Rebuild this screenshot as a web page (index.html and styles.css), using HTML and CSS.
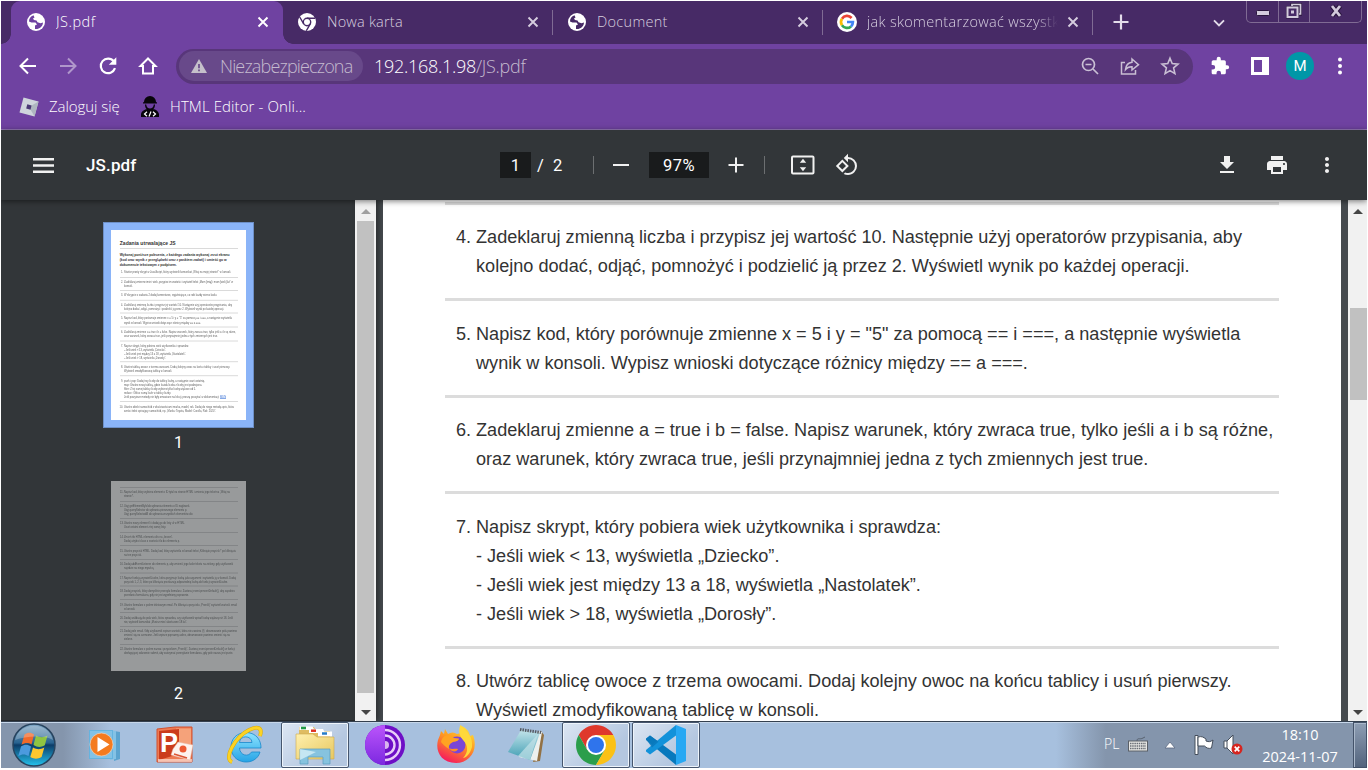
FILE: index.html
```html
<!DOCTYPE html>
<html lang="pl">
<head>
<meta charset="utf-8">
<title>JS.pdf</title>
<link rel="stylesheet" href="styles.css">
</head>
<body>
<svg class="defs" width="0" height="0">
  <defs>
    <symbol id="globe" viewBox="0 0 18 18"><circle cx="9" cy="9" r="9" fill="#fff"/><path d="M6.500 2.200C3.500 3.200 1.900 5.800 2 8.500L4.500 9.500H8.500L10 11.500 8 12.500V16c4 .6 7.800-2.200 8-6.500l-2.500.7-3-1L9.500 7.500 7 7 6 5.500 7.500 4.500z" fill="currentColor"/><path d="M10 2v2L8.500 5.500l2.500.8 1.500 1.500h3.400C15.500 5 13.300 2.500 10 2z" fill="#fff"/></symbol>
    <symbol id="x" viewBox="0 0 12 12"><path d="M1.500 1.500l9 9M10.500 1.500l-9 9" stroke="currentColor" stroke-width="1.900"/></symbol>
    <linearGradient id="orb" x1="0" y1="0" x2="0" y2="1"><stop offset="0" stop-color="#7fa6c4"/><stop offset=".45" stop-color="#28628f"/><stop offset=".5" stop-color="#0c3c68"/><stop offset="1" stop-color="#25c3ee"/></linearGradient>
    <linearGradient id="ie" x1="0" y1="0" x2="0" y2="1"><stop offset="0" stop-color="#8ee4ff"/><stop offset="1" stop-color="#26a4e6"/></linearGradient>
    <linearGradient id="fold" x1="0" y1="0" x2="1" y2="1"><stop offset="0" stop-color="#fff0ae"/><stop offset="1" stop-color="#e7c75f"/></linearGradient>
    <linearGradient id="tor" x1="0" y1="0" x2="0" y2="1"><stop offset="0" stop-color="#bb55fb"/><stop offset="1" stop-color="#7c28e0"/></linearGradient>
    <linearGradient id="fox" x1=".8" y1="0" x2=".3" y2="1"><stop offset="0" stop-color="#ffe73c"/><stop offset=".45" stop-color="#ff9a20"/><stop offset="1" stop-color="#f5175f"/></linearGradient>
    <linearGradient id="note" x1="0" y1="0" x2="0" y2="1"><stop offset="0" stop-color="#c3e4ea"/><stop offset="1" stop-color="#3d9cb2"/></linearGradient>
  </defs>
</svg>

<div class="screen">
  <header class="tabstrip">
    <div class="tab tab-active"><svg class="fav" color="#6f42a1"><use href="#globe"/></svg><span class="tab-title">JS.pdf</span><svg class="close"><use href="#x"/></svg></div>
    <div class="tab"><svg class="fav" viewBox="0 0 18 18"><circle cx="9" cy="9" r="9" fill="#fff"/><circle cx="9" cy="9" r="3.700" fill="#fff" stroke="#472a66" stroke-width="1.400"/><path d="M9 5.200h8M5.700 10.900 1.700 4M12.300 10.900 8.300 17.800" stroke="#472a66" stroke-width="1.400"/></svg><span class="tab-title t-nowa">Nowa karta</span><svg class="close"><use href="#x"/></svg></div>
    <div class="tab"><svg class="fav" color="#472a66"><use href="#globe"/></svg><span class="tab-title t-doc">Document</span><svg class="close"><use href="#x"/></svg></div>
    <div class="tab"><svg class="fav fav-g" viewBox="0 0 20 20"><circle cx="10" cy="10" r="10" fill="#fff"/><g fill="none" stroke-width="2.700"><path d="M14.600 6A6 6 0 0 0 5 6.700" stroke="#ea4335"/><path d="M5 6.700a6 6 0 0 0 0 6.600" stroke="#fbbc05"/><path d="M5 13.300a6 6 0 0 0 9 1.100" stroke="#34a853"/><path d="M14 14.400A6 6 0 0 0 15.900 10H10" stroke="#4285f4"/></g></svg><span class="tab-title t-jak">jak skomentarzować wszystko</span><svg class="close"><use href="#x"/></svg></div>
    <svg class="newtab" viewBox="0 0 16 16"><path d="M8 .5v15M.5 8h15" stroke="#e3dcea" stroke-width="2.200"/></svg>
    <svg class="chev" viewBox="0 0 12 8"><path d="M1 1.300l5 5 5-5" fill="none" stroke="#e3dcea" stroke-width="1.900"/></svg>
    <div class="wincontrols">
      <span><svg width="14" height="6" viewBox="0 0 14 6"><rect x=".5" y=".5" width="13" height="5" rx="1" fill="#d3cbdc" stroke="#2b173f"/></svg></span>
      <span><svg width="16" height="16" viewBox="0 0 16 16"><path d="M6 4V1.500h8.500V11H12" fill="none" stroke="#2b173f" stroke-width="3.400"/><path d="M6 4V1.500h8.500V11H12" fill="none" stroke="#d3cbdc" stroke-width="1.700"/><rect x="1.500" y="4.500" width="10" height="9.500" fill="#472a66" stroke="#2b173f" stroke-width="3"/><rect x="1.500" y="4.500" width="10" height="9.500" fill="#472a66" stroke="#d3cbdc" stroke-width="2"/><rect x="5" y="7.500" width="3" height="3" fill="#d3cbdc"/></svg></span>
      <span><svg width="14" height="14" viewBox="0 0 14 14"><path d="M3 2l8 10M11 2L3 12" stroke="#2b173f" stroke-width="5"/><path d="M3 2l8 10M11 2L3 12" stroke="#d3cbdc" stroke-width="2.800"/></svg></span>
    </div>
  </header>

  <nav class="toolbar">
    <svg class="tool" viewBox="0 0 20 20"><path d="M18 10H3M10 2.500 2.500 10l7.500 7.500" fill="none" stroke="#fff" stroke-width="2"/></svg>
    <svg class="tool dim" viewBox="0 0 20 20"><path d="M2 10h15M10 2.500l7.500 7.500-7.500 7.500" fill="none" stroke="#fff" stroke-width="2"/></svg>
    <svg class="tool" viewBox="0 0 20 20"><path d="M15.800 5.300A7.300 7.300 0 1 0 17 12.200" fill="none" stroke="#fff" stroke-width="2.200"/><path d="M18.300 1.200v7.500h-7.500z" fill="#fff"/></svg>
    <svg class="tool" viewBox="0 0 20 20"><path d="M10 2.500 2.500 10H5v7.500h10V10h2.500z" fill="none" stroke="#fff" stroke-width="2"/></svg>
    <div class="omnibox">
      <div class="chip"><svg width="16" height="14" viewBox="0 0 16 14"><path d="M8 0l8 14H0z" fill="#c5c0ca"/><path d="M8 5v4.300M8 10.500v1.700" stroke="#68498a" stroke-width="1.700"/></svg><span class="chip-text">Niezabezpieczona</span></div>
      <span class="url">192.168.1.98<i>/JS.pdf</i></span>
      <svg class="om" viewBox="0 0 20 20"><g fill="none" stroke="#c9bfd4" stroke-width="1.700"><circle cx="8.500" cy="8.500" r="6"/><path d="M13 13l5 5M5.500 8.500h6"/></g></svg>
      <svg class="om" viewBox="0 0 20 20"><g fill="none" stroke="#c9bfd4" stroke-width="1.500"><path d="M5 6.500H1.500v11.500h14v-4"/><path d="M12 3l6.500 5.700L12 14v-3.300c-3-.2-5 .8-6.500 2.800.4-4 2.500-6.700 6.500-7.200z"/></g></svg>
      <svg class="om" viewBox="0 0 20 20"><path d="M10 2.200l2.200 5.400 5.800.5-4.400 3.800 1.300 5.700-4.900-3-4.900 3 1.300-5.700L2 8.100l5.800-.5z" fill="none" stroke="#c9bfd4" stroke-width="1.600"/></svg>
    </div>
    <svg class="tool ext" viewBox="0 0 24 24"><path fill="#fff" d="M20.500 11H19V7a2 2 0 0 0-2-2h-4V3.500a2.500 2.500 0 0 0-5 0V5H4a2 2 0 0 0-2 2v3.800h1.500a2.700 2.700 0 0 1 0 5.400H2V20c0 1.100.9 2 2 2h3.800v-1.500a2.700 2.700 0 0 1 5.400 0V22H17a2 2 0 0 0 2-2v-4h1.500a2.500 2.500 0 0 0 0-5z"/></svg>
    <svg class="tool" viewBox="0 0 20 20"><path fill="#fff" fill-rule="evenodd" d="M1 1h18v18H1zM4 4v12h8V4z"/></svg>
    <span class="avatar">M</span>
    <svg class="tool" viewBox="0 0 20 20"><g fill="#fff"><circle cx="10" cy="3.500" r="2"/><circle cx="10" cy="10" r="2"/><circle cx="10" cy="16.500" r="2"/></g></svg>
  </nav>

  <nav class="bookmarks">
    <svg width="20" height="20" viewBox="0 0 20 20"><path d="M4.500.5 19.500 4.500 15.500 19.500.5 15.500z" fill="#cfd5dc"/><path d="M10 10l9.500-5.500-4 15z" fill="#aeb6c0"/><path d="M8.300 7.300l4.300 1.100-1.100 4.300-4.300-1.100z" fill="#4b3a75"/></svg>
    <span class="bm-a">Zaloguj się</span>
    <svg width="20" height="22" viewBox="0 0 20 22"><path d="M4 6a6 6 0 0 1 12 0l1 .5v1H3v-1zM5 8.500h10c0 8-10 8-10 0zM1 21v-3c1-3.500 4-4.500 6-5l3 1.500 3-1.500c3 .5 5 2 6 5v3z" fill="#08050b"/><path d="M6.200 8h7.600c0 6-7.600 6-7.600 0z" fill="#6f42a1"/><path d="M7 15.800 4.500 18 7 20.200M13 15.800l2.500 2.200-2.500 2.200M11 15.500l-2 5" fill="none" stroke="#fff" stroke-width="1.200"/></svg>
    <span class="bm-b">HTML Editor - Onli...</span>
  </nav>

  <div class="pdfbar">
    <svg class="burger" viewBox="0 0 21 15"><path d="M0 1.300h21M0 7.500h21M0 13.700h21" stroke="#f1f1f1" stroke-width="2.400"/></svg>
    <strong class="pdf-title">JS.pdf</strong>
    <span class="pagebox">1</span><span class="pagecount">/ &nbsp;2</span>
    <i class="sep"></i>
    <svg class="minus" viewBox="0 0 16 16"><path d="M0 8h16" stroke="#f1f1f1" stroke-width="2"/></svg>
    <span class="zoombox">97%</span>
    <svg class="plus" viewBox="0 0 16 16"><path d="M.5 8h15M8 .5v15" stroke="#f1f1f1" stroke-width="2"/></svg>
    <i class="sep sep2"></i>
    <svg class="fit" viewBox="0 0 24 20"><rect x="1" y="1.500" width="21.500" height="17" rx="1" fill="none" stroke="#f1f1f1" stroke-width="2"/><path d="M12 3.800l3.200 4H8.800zM12 16.200l3.200-4H8.800z" fill="#f1f1f1"/></svg>
    <svg class="rot" viewBox="0 0 24 24"><path fill="#f1f1f1" d="M7.340 6.410L.86 12.900l6.490 6.480 6.490-6.480-6.500-6.490zM3.690 12.900l3.660-3.660L11 12.900l-3.660 3.660-3.650-3.660zm15.670-6.260A8.950 8.950 0 0 0 13 4V.76L8.760 5 13 9.240V6c1.790 0 3.580.68 4.950 2.050a7.007 7.007 0 0 1 0 9.900 6.973 6.973 0 0 1-7.790 1.440l-1.490 1.490C10.020 21.620 11.510 22 13 22c2.300 0 4.610-.88 6.360-2.640a8.980 8.980 0 0 0 0-12.720z"/></svg>
    <div class="pdf-actions">
      <svg viewBox="0 0 24 24"><path fill="#f1f1f1" d="M19 9h-4V3H9v6H5l7 7 7-7zM5 18v2h14v-2H5z"/></svg>
      <svg viewBox="0 0 24 24"><path fill="#f1f1f1" d="M19 8H5c-1.660 0-3 1.340-3 3v6h4v4h12v-4h4v-6c0-1.660-1.340-3-3-3zm-3 11H8v-5h8v5zm3-7c-.55 0-1-.45-1-1s.45-1 1-1 1 .45 1 1-.45 1-1 1zm-1-9H6v4h12V3z"/></svg>
      <svg viewBox="0 0 24 24"><path fill="#f1f1f1" d="M12 8c1.100 0 2-.9 2-2s-.9-2-2-2-2 .9-2 2 .9 2 2 2zm0 2c-1.100 0-2 .9-2 2s.9 2 2 2 2-.9 2-2-.9-2-2-2zm0 6c-1.100 0-2 .9-2 2s.9 2 2 2 2-.9 2-2-.9-2-2-2z"/></svg>
    </div>
  </div>

  <main class="viewer">
    <aside class="thumbs">
      <div class="thumb selected">
        <svg width="135" height="190" viewBox="0 0 135 190">
          <rect width="135" height="190" fill="#fff"/>
          <g stroke="#d6d6d6" stroke-width=".9"><path d="M9 18.500h118M9 47.500h118M9 60.500h118M9 70.300h118M9 83h118M9 97h118M9 111h118M9 131.700h118M9 145.700h118M9 171.500h118"/></g>
          <g font-weight="bold" fill="#333"><text x="8.700" y="15" font-size="5" textLength="56">Zadania utrwalające JS</text>
          <g font-size="3.400"><text x="8.700" y="26" textLength="110">Wykonaj poniższe polecenia, z każdego zadania wykonaj zrzut ekranu</text><text x="8.700" y="31" textLength="107">(kod oraz wynik z przeglądarki oraz z paskiem zadań) i umieść go w</text><text x="8.700" y="36" textLength="57">dokumencie tekstowym z podpisem.</text></g></g>
          <g class="fine" font-size="2.550" fill="#444">
            <text x="10" y="43">1.</text><text x="13" y="43" textLength="107">Stwórz prosty skrypt w JavaScript, który wyświetli komunikat „Witaj na mojej stronie!” w konsoli.</text>
            <text x="10" y="53">2.</text><text x="13" y="53" textLength="109">Zadeklaruj zmienne imie i wiek, przypisz im wartości i wyświetl tekst „Mam [imię] i mam [wiek] lat” w</text><text x="13" y="57">konsoli.</text>
            <text x="10" y="66">3.</text><text x="13" y="66" textLength="93">W skrypcie z zadania 2 dodaj komentarze, wyjaśniające, co robi każdy wiersz kodu.</text>
            <text x="10" y="76">4.</text><text x="13" y="76" textLength="108">Zadeklaruj zmienną liczba i przypisz jej wartość 10. Następnie użyj operatorów przypisania, aby</text><text x="13" y="80" textLength="100">kolejno dodać, odjąć, pomnożyć i podzielić ją przez 2. Wyświetl wynik po każdej operacji.</text>
            <text x="10" y="89">5.</text><text x="13" y="89" textLength="108">Napisz kod, który porównuje zmienne x = 5 i y = "5" za pomocą == i ===, a następnie wyświetla</text><text x="13" y="93.500" textLength="77">wynik w konsoli. Wypisz wnioski dotyczące różnicy między == a ===.</text>
            <text x="10" y="103">6.</text><text x="13" y="103" textLength="112">Zadeklaruj zmienne a = true i b = false. Napisz warunek, który zwraca true, tylko jeśli a i b są różne,</text><text x="13" y="107" textLength="94">oraz warunek, który zwraca true, jeśli przynajmniej jedna z tych zmiennych jest true.</text>
            <text x="10" y="117">7.</text><text x="13" y="117" textLength="65">Napisz skrypt, który pobiera wiek użytkownika i sprawdza:</text><text x="13" y="121" textLength="42">- Jeśli wiek &lt; 13, wyświetla „Dziecko”.</text><text x="13" y="125" textLength="62">- Jeśli wiek jest między 13 a 18, wyświetla „Nastolatek”.</text><text x="13" y="129" textLength="42">- Jeśli wiek &gt; 18, wyświetla „Dorosły”.</text>
            <text x="10" y="138">8.</text><text x="13" y="138" textLength="106">Utwórz tablicę owoce z trzema owocami. Dodaj kolejny owoc na końcu tablicy i usuń pierwszy.</text><text x="13" y="142" textLength="48">Wyświetl zmodyfikowaną tablicę w konsoli.</text>
            <text x="10" y="152">9.</text><text x="13" y="152" textLength="81">push i pop: Dodaj trzy liczby do tablicy liczby, a następnie usuń ostatnią.</text><text x="13" y="156" textLength="78">map: Utwórz nową tablicę, gdzie każda liczba z liczby jest podwojona.</text><text x="13" y="160" textLength="72">filter: Z tej samej tablicy liczby wybierz tylko liczby większe od 5.</text><text x="13" y="164" textLength="47">reduce: Oblicz sumę liczb w tablicy liczby.</text><text x="13" y="168" textLength="95">Jeśli powyższe metody nie były omawiane na lekcji, proszę poczytać w dokumentacji</text><text class="link" x="109" y="168" textLength="6">MDN</text><path d="M109 168.500h6" stroke="#15c" stroke-width=".6"/>
            <text x="8.500" y="178">10.</text><text x="13" y="178" textLength="110">Utwórz obiekt samochód z właściwościami marka, model, rok. Dodaj do niego metodę opis, która</text><text x="13" y="182" textLength="92">zwróci tekst opisujący samochód, np. „Marka: Toyota, Model: Corolla, Rok: 2020”.</text>
          </g>
        </svg>
      </div>
      <span class="thumb-no">1</span>
      <div class="thumb">
        <svg width="135" height="190" viewBox="0 0 135 190">
          <rect width="135" height="190" fill="#989a9b"/>
          <path d="M9 6.500h118M9 20.500h118M9 37.500h118M9 51.500h118M9 64.500h118M9 78.500h118M9 92h118M9 105h118M9 118.500h118M9 131.500h118M9 145.500h118M9 163.500h118" stroke="#808284" stroke-width=".9"/>
          <g class="fine" font-size="2.550" fill="#3c3f41">
            <text x="9" y="12">11.</text><text x="13" y="12" textLength="106">Napisz kod, który wybiera element o ID tytul na stronie HTML i zmienia jego tekst na „Witaj na</text><text x="13" y="16">stronie!”.</text>
            <text x="9" y="26">12.</text><text x="13" y="26" textLength="66">Użyj getElementById do wybrania elementu o ID naglowek.</text><text x="13" y="30" textLength="63">Użyj querySelector do wybrania pierwszego elementu p.</text><text x="13" y="34" textLength="69">Użyj querySelectorAll do wybrania wszystkich elementów div.</text>
            <text x="9" y="43">13.</text><text x="13" y="43" textLength="61">Utwórz nowy element li i dodaj go do listy ul w HTML.</text><text x="13" y="47" textLength="42">Usuń ostatni element z tej samej listy.</text>
            <text x="9" y="57">14.</text><text x="13" y="57" textLength="49">Zmień tło HTML elementu div na „brown”.</text><text x="13" y="61" textLength="56">Dodaj atrybut class o wartości tlo do elementu p.</text>
            <text x="9" y="71">15.</text><text x="13" y="71" textLength="112">Utwórz przycisk HTML. Dodaj kod, który wyświetla w konsoli tekst „Kliknięto przycisk!” po kliknięciu</text><text x="13" y="75">na ten przycisk.</text>
            <text x="9" y="84">16.</text><text x="13" y="84" textLength="109">Dodaj addEventListener do elementu p, aby zmienić jego kolor tekstu na zielony, gdy użytkownik</text><text x="13" y="88">najedzie na niego myszką.</text>
            <text x="9" y="98">17.</text><text x="13" y="98" textLength="112">Napisz funkcję wyswietlLiczbe, która przyjmuje liczbę jako argument i wyświetla ją w konsoli. Dodaj</text><text x="13" y="102" textLength="104">przyciski 1, 2, 3, które po kliknięciu przekazują odpowiednią liczbę do funkcji wyswietlLiczbe.</text>
            <text x="9" y="111">18.</text><text x="13" y="111" textLength="111">Dodaj przycisk, który domyślnie przesyła formularz. Zastosuj event.preventDefault(), aby zapobiec</text><text x="13" y="115" textLength="65">przesłaniu formularza, gdy nie jest wypełniony poprawnie.</text>
            <text x="9" y="125">19.</text><text x="13" y="125" textLength="113">Utwórz formularz z polem tekstowym email. Po kliknięciu przycisku „Prześlij” wyświetl wartość email</text><text x="13" y="129">w konsoli.</text>
            <text x="9" y="138">20.</text><text x="13" y="138" textLength="109">Dodaj walidację do pola wiek, która sprawdza, czy użytkownik wpisał liczbę większą niż 18. Jeśli</text><text x="13" y="142" textLength="63">nie, wyświetl komunikat „Musisz mieć ukończone 18 lat”.</text>
            <text x="9" y="151">21.</text><text x="13" y="151" textLength="113">Dodaj pole email. Gdy użytkownik wpisze wartość, która nie zawiera @, obramowanie pola powinno</text><text x="13" y="155" textLength="106">zmienić się na czerwone. Jeśli wpisze poprawny adres, obramowanie powinno zmienić się na</text><text x="13" y="159">zielone.</text>
            <text x="9" y="169">22.</text><text x="13" y="169" textLength="111">Utwórz formularz z polem nazwa i przyciskiem „Prześlij”. Zastosuj event.preventDefault() w funkcji</text><text x="13" y="173" textLength="109">obsługującej zdarzenie submit, aby zatrzymać przesyłanie formularza, gdy pole nazwa jest puste.</text>
          </g>
        </svg>
      </div>
      <span class="thumb-no two">2</span>
    </aside>
    <div class="scroll scroll-side"><b class="up off"></b><b class="bar"></b><b class="down"></b></div>
    <div class="stage">
      <article class="page">
        <ol class="tasks" start="4">
          <li><span class="num">4.</span><p><span>Zadeklaruj zmienną liczba i przypisz jej wartość 10. Następnie użyj operatorów przypisania, aby</span><span>kolejno dodać, odjąć, pomnożyć i podzielić ją przez 2. Wyświetl wynik po każdej operacji.</span></p></li>
          <li><span class="num">5.</span><p><span>Napisz kod, który porównuje zmienne x = 5 i y = "5" za pomocą == i ===, a następnie wyświetla</span><span>wynik w konsoli. Wypisz wnioski dotyczące różnicy między == a ===.</span></p></li>
          <li><span class="num">6.</span><p><span>Zadeklaruj zmienne a = true i b = false. Napisz warunek, który zwraca true, tylko jeśli a i b są różne,</span><span>oraz warunek, który zwraca true, jeśli przynajmniej jedna z tych zmiennych jest true.</span></p></li>
          <li><span class="num">7.</span><p><span>Napisz skrypt, który pobiera wiek użytkownika i sprawdza:</span><span>- Jeśli wiek &lt; 13, wyświetla „Dziecko”.</span><span>- Jeśli wiek jest między 13 a 18, wyświetla „Nastolatek”.</span><span>- Jeśli wiek &gt; 18, wyświetla „Dorosły”.</span></p></li>
          <li><span class="num">8.</span><p><span>Utwórz tablicę owoce z trzema owocami. Dodaj kolejny owoc na końcu tablicy i usuń pierwszy.</span><span>Wyświetl zmodyfikowaną tablicę w konsoli.</span></p></li>
        </ol>
      </article>
    </div>
    <div class="scroll scroll-main"><b class="up"></b><b class="bar"></b><b class="down"></b></div>
  </main>

  <footer class="taskbar">
    <div class="start"><svg width="44" height="44" viewBox="0 0 44 44"><circle cx="22" cy="22" r="21" fill="url(#orb)" stroke="#28445f" stroke-width="1.500"/><path d="M12.500 11.500c3.500-2.500 6.500-2 9.500 0l-2.500 10c-3.500-2.200-6.500-1.800-10 .2z" fill="#f06a2b"/><path d="M24 12.500c4 2.300 7.500 2.300 11.500 0l-2.700 9.700c-4 2.300-7.300 2.300-11.300-.2z" fill="#8fc442"/><path d="M9 23.500c3.500-2.200 6.500-2.200 10 0l-2.500 9.500c-3.500-2.300-6.700-2-10.200 0z" fill="#4b9ade"/><path d="M21 24.500c4 2.300 7.300 2.300 11.300 0l-2.700 9.500c-4 2.300-7.300 2.300-11.300 0z" fill="#fcc72f"/><path d="M3 17C7-2 37-2 41 17c-9-5-27-4-38 0z" fill="#fff" opacity=".25"/></svg></div>
    <div class="app"><svg width="36" height="34" viewBox="0 0 36 34"><path d="M27 3l6 1v27l-6 2z" fill="#5ba3cf"/><path d="M23 2l6 1v28l-6 1z" fill="#84c2e5"/><rect x="2" y="2" width="24" height="29" fill="#65b3df"/><rect x="3" y="3" width="22" height="27" fill="#82c2e6"/><circle cx="14.500" cy="16.500" r="11.500" fill="#f47b1f" stroke="#e9dccf" stroke-width=".7"/><path d="M10.500 9 22.500 16.500l-12 7.500z" fill="#fff"/></svg></div>
    <div class="app"><svg width="40" height="40" viewBox="0 0 40 40"><path d="M2 4 20 2h17v35H2z" fill="#ee7a52" stroke="#d2502f"/><path d="M21 3.500h15v20l-15 2z" fill="#f5a27a"/><path d="M4 6 24 4v25L4 35z" fill="#cb3c1c"/><path d="M3 34h34v3H3z" fill="#fff" opacity=".55"/><path d="M23 17l15 3-3 15-19-5 2-6z" fill="#fdf3ee" stroke="#e8b7a3" stroke-width=".5"/><circle cx="28" cy="24" r="3.500" fill="#ed5a32"/><path d="M19 29l13 4" stroke="#dc5433" stroke-width="1.500"/><text x="5" y="27" font-size="27" font-weight="bold" fill="#fff" stroke="#cb3c1c" stroke-width="1" paint-order="stroke">P</text></svg></div>
    <div class="app"><svg width="40" height="40" viewBox="0 0 40 40"><path d="M36 23H14.500c.3 7.500 9 9.500 12 4h8.500C31 42 6 40 6 22 6 3 36 2 36 23zm-9-5.500c-.3-7.500-12.300-7.500-12.500 0z" fill="url(#ie)" stroke="#1788cc" stroke-width=".8"/><path d="M7 37C-2 34 10 12 24 5c8-4 14-3 11 6" fill="none" stroke="#dba90a" stroke-width="3.800"/><path d="M7 37C-2 34 10 12 24 5c8-4 14-3 11 6" fill="none" stroke="#fbd324" stroke-width="2.800"/></svg></div>
    <div class="app open"><svg width="40" height="40" viewBox="0 0 40 40"><path d="M4 2h15l2 4h14v28H4z" fill="#dfbc62"/><path d="M4.500 1.500h13l2 3.500h-15z" fill="#fff"/><path d="M6 3h5" stroke="#219a48" stroke-width="2.600"/><path d="M14 4h14l2 4H14z" fill="#fff"/><path d="M16 5.700h5" stroke="#df3122" stroke-width="2.500"/><path d="M23 6.500h14v5H23z" fill="#fff"/><path d="M27 8.500h5" stroke="#277cc9" stroke-width="2.500"/><path d="M1 9h17l4 3h17v22H1z" fill="url(#fold)" stroke="#cda94e" stroke-width=".6"/><path d="M5 24h30v15h-7v-7H13v7H5z" fill="#86c3df" stroke="#599cbd" stroke-width=".7"/><path d="M5 24l16 3-16 8z" fill="#dff5f9" opacity=".7"/></svg></div>
    <div class="app"><svg width="40" height="40" viewBox="0 0 40 40"><circle cx="20" cy="20" r="20" fill="#6e0fc6"/><path d="M20 0a20 20 0 0 0 0 40z" fill="url(#tor)"/><g fill="none" stroke="#e8cdf7" stroke-width="2.400"><path d="M20 5a15 15 0 0 1 0 30M20 10.500a9.500 9.500 0 0 1 0 19"/></g><path d="M20 16a4 4 0 0 1 0 8z" fill="#d9b4ee"/></svg></div>
    <div class="app"><svg width="40" height="40" viewBox="0 0 40 40"><path d="M2 15 4 10l1-4 3 3 1-5 3 5c3-2 6-2 9 0l4-1-1-8c8 4 9 7 10 11l3-1c6 16-4 28-17 28C5 38-1 26 2 15z" fill="url(#fox)"/><circle cx="21" cy="20" r="8.500" fill="#7a45d6"/><path d="M24 1c8 5 13 11 12 21-2 8-7 11-9 11 6-6 5-13 0-18-3-4-5-8-3-14z" fill="#ffd83a"/><path d="M5 17c2-8 9-8 13-4l5 .5c0 2-2 3-6 3.500-2 1-5 3-4 7-4-2-6-5-8-7z" fill="#ffa322"/><path d="M13 23c4 2 6 0 9 1-1 3-6 4-9-1z" fill="#ff8c25"/></svg></div>
    <div class="app"><svg width="40" height="40" viewBox="0 0 40 40"><path d="M35 6l3 4-4 26-7 1z" fill="#927144"/><path d="M32 6l4 1-5 29-18-4z" fill="#edf0ed"/><path d="M15 5l19 3-10 27L2 27z" fill="url(#note)"/><path d="M24 35 12 31l20-22z" fill="#c5e3e8" opacity=".7"/><path d="M14 4.500l21 3" stroke="#555c63" stroke-width="3" stroke-dasharray="1.500 1"/></svg></div>
    <div class="app open"><svg width="40" height="40" viewBox="0 0 40 40"><path d="M2.700 10A20 20 0 0 1 37.300 10H20l-8.700 15z" fill="#df382c"/><path d="M2.700 10A20 20 0 0 0 20 40l8.700-15H11.300z" fill="#2b9e4b"/><path d="M37.300 10A20 20 0 0 1 20 40l8.700-15L20 10z" fill="#fbc116"/><circle cx="20" cy="20" r="10" fill="#fff"/><circle cx="20" cy="20" r="8" fill="#2f74ec"/></svg></div>
    <div class="app open"><svg width="40" height="40" viewBox="0 0 40 40"><path d="M0 13.500 4 10.500l26 19V40L0 15z" fill="#0879bd"/><path d="M0 26.500 4 29.500l26-19V0L0 25z" fill="#1292da"/><path d="M0 14 4 10.500l8.500 6.300-6.500 5.700z" fill="#0879bd" opacity=".85"/><path d="M30 0l10 4v32l-10 4z" fill="#27a8f3"/></svg></div>
    <div class="tray">
      <span class="lang">PL</span>
      <svg class="kbd" width="20" height="16" viewBox="0 0 20 16"><path d="M9 5c0-4 3-1 6-3l2-1" fill="none" stroke="#596370"/><rect x=".5" y="5" width="19" height="10" fill="#e7e7e4" stroke="#5b6067"/><path d="M2 7.500h16M2 10h16M2 12.500h16" stroke="#686d74" stroke-width="1.300" stroke-dasharray="1.500 .7"/></svg>
      <svg class="arrow" width="12" height="8" viewBox="0 0 12 8"><path d="M6 1l5 6H1z" fill="#fff" stroke="#5a6880" stroke-width=".8"/></svg>
      <svg class="flag" width="20" height="22" viewBox="0 0 20 22"><path d="M1 1.500h3v19H1z" fill="#fff" stroke="#444e5b"/><path d="M4 3c4-1 5 0 8 2v2c3 1 4 1 7-1l-1.500 8c-3 1-5 0-7-2H4z" fill="#fff" stroke="#444e5b"/></svg>
      <svg class="spk" width="20" height="22" viewBox="0 0 20 22"><path d="M1 7h3l6-6v19l-6-6H1z" fill="#fff" stroke="#444e5b"/><path d="M4 7v7" stroke="#444e5b"/><circle cx="14" cy="15" r="5.500" fill="#d6251f"/><path d="M11.700 12.700l4.600 4.600M16.300 12.700l-4.600 4.600" stroke="#fff" stroke-width="1.700"/></svg>
      <div class="clock"><span>18:10</span><span>2024-11-07</span></div>
      <i class="peek"></i>
    </div>
  </footer>
</div>
</body>
</html>
```
FILE: styles.css
```css
* { box-sizing: border-box; }
body { margin: 0; background: #fff; font-family: "Liberation Sans", Arial, sans-serif; overflow: hidden; }
svg { display: block; flex: none; }
.defs { position: absolute; }
.screen { width: 1366px; height: 767px; margin: 1px; display: flex; flex-direction: column; overflow: hidden; }

/* tab strip */
.tabstrip { height: 43px; flex: none; display: flex; align-items: flex-start; background: #472a66; padding-left: 12px; font: 300 14.500px "Open Sans", "Noto Sans", sans-serif; color: #d6cedf; }
.tab { width: 270px; height: 43px; display: flex; align-items: center; padding: 0 14px 1px 15px; position: relative; flex: none; }
.tab-active { width: 272px; margin: 0 0 0 -2px; padding-left: 16px; background: #6f42a1; border-radius: 9px 9px 0 0; color: #fff; }
.tab-active::before, .tab-active::after { content: ""; position: absolute; bottom: 0; width: 10px; height: 10px; }
.tab-active::before { left: -10px; background: radial-gradient(circle at 0 0, transparent 9.500px, #6f42a1 10px); }
.tab-active::after { right: -10px; background: radial-gradient(circle at 100% 0, transparent 9.500px, #6f42a1 10px); }
.tab + .tab:not(:nth-child(2))::before { content: ""; position: absolute; left: -1px; top: 9px; width: 1px; height: 25px; background: #806b94; }
.tab:nth-child(4)::after { content: ""; position: absolute; right: 0; top: 9px; width: 1px; height: 25px; background: #806b94; }
.fav { width: 18px; height: 18px; }
.fav-g { width: 20px; height: 20px; margin: 0 -1px; }
.tab-title { margin-left: 11px; flex: 1; white-space: nowrap; overflow: hidden; line-height: 20px; padding-bottom: 1px; }
.tab-active .tab-title { letter-spacing: .5px; }
.t-nowa { letter-spacing: .2px; }
.t-doc { letter-spacing: .3px; }
.t-jak { letter-spacing: .3px; -webkit-mask-image: linear-gradient(90deg, #000 170px, transparent 191px); mask-image: linear-gradient(90deg, #000 170px, transparent 191px); }
.close { width: 12px; height: 12px; }
.newtab { width: 16px; height: 16px; margin: 13px 0 0 20px; }
.chev { width: 12px; height: 8px; margin: 18px 0 0 84px; }
.wincontrols { display: flex; height: 22px; margin-left: 21px; border: 1px solid #806b94; border-top: 0; border-radius: 0 0 5px 5px; }
.wincontrols span { width: 31px; display: flex; align-items: center; justify-content: center; padding-bottom: 1px; }
.wincontrols span + span { border-left: 1px solid #806b94; }
.wincontrols span:nth-child(1) { padding-top: 4px; }
.wincontrols span:nth-child(3) { width: 52px; }

/* address bar */
.toolbar { height: 44px; flex: none; display: flex; align-items: center; background: #6f42a1; padding: 0 0 0 17px; }
.tool { width: 20px; height: 20px; margin-right: 20px; }
.dim { opacity: .45; }
.toolbar .tool:nth-child(4) { margin-right: 18px; }
.omnibox { width: 1017px; height: 35px; flex: none; border-radius: 18px; background: #58367a; display: flex; align-items: center; padding: 0 13px 0 3px; font: 300 18px "Open Sans", "Noto Sans", sans-serif; margin-right: 16px; }
.chip { width: 184px; height: 30px; border-radius: 15px; background: #68498a; display: flex; align-items: center; padding-left: 12px; color: #c5bbcf; }
.chip-text { margin-left: 13px; white-space: nowrap; letter-spacing: -.85px; }
.url { margin-left: 11px; flex: 1; color: #fff; white-space: nowrap; letter-spacing: -.28px; }
.url i { font-style: normal; color: #c5bbcf; }
.om { width: 20px; height: 20px; margin-left: 20px; }
.avatar { width: 28px; height: 28px; flex: none; margin: 0 16px 0 -4px; border-radius: 50%; background: #0097a7; color: #fff; display: flex; align-items: center; justify-content: center; font: 15px Roboto, sans-serif; }
.toolbar .ext { margin-left: 1px; }
.toolbar .tool:last-child { margin-right: 0; }

.bookmarks { height: 42px; flex: none; display: flex; align-items: center; background: #6f42a1; padding: 0 0 4px 18px; border-bottom: 1px solid #9a7bbd; color: #fff; font: 300 15px "Open Sans", "Noto Sans", sans-serif; white-space: nowrap; }
.bm-a { width: 91px; margin-left: 10px; letter-spacing: -.05px; padding-bottom: 2px; }
.bm-b { margin-left: 10px; letter-spacing: .1px; padding-bottom: 2px; }

/* PDF toolbar */
.pdfbar { height: 70px; flex: none; display: flex; align-items: center; background: #323639; color: #fff; font: 16.500px Roboto, sans-serif; padding-left: 32px; position: relative; z-index: 1; box-shadow: 0 1px 6px rgba(0,0,0,.55); }
.burger { width: 21px; height: 15px; }
.pdf-title { width: 414px; margin-left: 32px; font-weight: 500; font-size: 17px; letter-spacing: .15px; }
.pagebox, .zoombox { height: 26px; background: #191b1c; display: flex; align-items: center; justify-content: center; }
.pagebox { width: 31px; }
.pagecount { width: 62px; padding-left: 6px; letter-spacing: .3px; }
.zoombox { width: 60px; letter-spacing: .4px; }
.sep { width: 1px; height: 18px; background: #6c6f71; }
.minus { width: 16px; height: 16px; margin: 0 20px 0 19px; }
.plus { width: 16px; height: 16px; margin: 0 20px 0 19px; }
.fit { width: 24px; height: 20px; margin-left: 26px; }
.rot { width: 24px; height: 24px; margin-left: 20px; }
.pdf-actions { display: flex; gap: 26px; margin-left: auto; padding-right: 28.500px; }
.pdf-actions svg { width: 24px; height: 24px; }

/* viewer */
.viewer { height: 521px; flex: none; display: flex; background: #454a4e; overflow: hidden; }
.thumbs { width: 354px; flex: none; background: #323639; display: flex; flex-direction: column; align-items: center; padding: 22px 0 0; color: #fff; font: 16px Roboto, sans-serif; border-bottom: 1px solid #24272a; }
.thumb { width: 151px; padding: 0 8px; flex: none; }
.thumb.selected { height: 206px; padding: 7px; background: #8ab4f8; border: 1px solid #6d8fc6; }
.thumb text { font-family: "Liberation Sans", Arial, sans-serif; }
.fine { opacity: .85; }
.fine .link { fill: #15c; }
.thumb-no { height: 53px; line-height: 30px; padding-left: 1px; }
.two { height: 40px; line-height: 46px; }
.scroll { flex: none; background: #f1f1f1; display: flex; flex-direction: column; align-items: center; }
.scroll-side { width: 21px; margin-right: 7px; padding: 9px 0 6px; box-shadow: 3px 0 5px rgba(0,0,0,.35); }
.scroll-main { width: 19px; margin-left: auto; padding: 9px 0 6px; }
.up, .down { border: 5px solid transparent; width: 0; height: 0; }
.up { border-bottom-color: #454545; border-top: 0; }
.up.off { border-bottom-color: #a0a0a0; }
.down { border-top-color: #454545; border-bottom: 0; margin-top: auto; }
.bar { width: 17px; background: #c1c1c1; }
.scroll-side .bar { height: 472px; margin-top: 7px; }
.scroll-main .bar { height: 92px; margin-top: 94px; margin-left: 2px; }
.stage { width: 958px; overflow: hidden; }
.page { height: 521px; background: #fff; padding: 2px 62px 0; }
.tasks { list-style: none; margin: 0; padding: 0; color: #333; font-size: 18.120px; line-height: 29px; }
.tasks li { height: 96.400px; border-top: 3px solid #dcdcdc; padding-top: 18.300px; display: flex; }
.tasks li:nth-child(4) { height: 154.800px; padding-top: 19px; }
.num { width: 31px; padding-left: 11px; flex: none; }
.tasks p { margin: 0; display: flex; flex-direction: column; white-space: nowrap; }

/* taskbar */
.taskbar { height: 47px; flex: none; display: flex; align-items: center; border-top: 1px solid #34404f; box-shadow: inset 0 1px #c6d6e9; background: linear-gradient(90deg, #8495ac 0, #8495ac 62px, #a7c0de 110px, #a7c0de 1055px, #8495ac 1105px); }
.start { width: 69px; padding-left: 11px; }
.app { width: 70.100px; height: 46px; display: flex; align-items: center; justify-content: center; flex: none; }
.open { border: 1px solid #46566e; border-radius: 2px; background: linear-gradient(135deg, #dce6f3, #b4c7e0 70%); box-shadow: inset 0 0 0 1px #edf4fb; }
.taskbar .open { width: 68.100px; margin: 0 1px; }
.tray { margin-left: auto; height: 46px; display: flex; align-items: center; color: #fff; }
.lang { font: 300 14px "Open Sans", sans-serif; width: 24px; padding-bottom: 3px; }
.kbd { margin-bottom: 3px; }
.arrow { margin: 0 0 0 16px; }
.flag { margin-left: 18px; }
.spk { margin-left: 9px; }
.clock { width: 110px; padding: 1px 0 0 4px; margin-right: 0; display: flex; flex-direction: column; align-items: center; font: 14.500px/22px "Open Sans", sans-serif; }
.peek { width: 14px; height: 46px; border: 1px solid #44536a; background: linear-gradient(#8e9eb4, #53647d); box-shadow: inset 1px 1px #aab8ca; }
```
